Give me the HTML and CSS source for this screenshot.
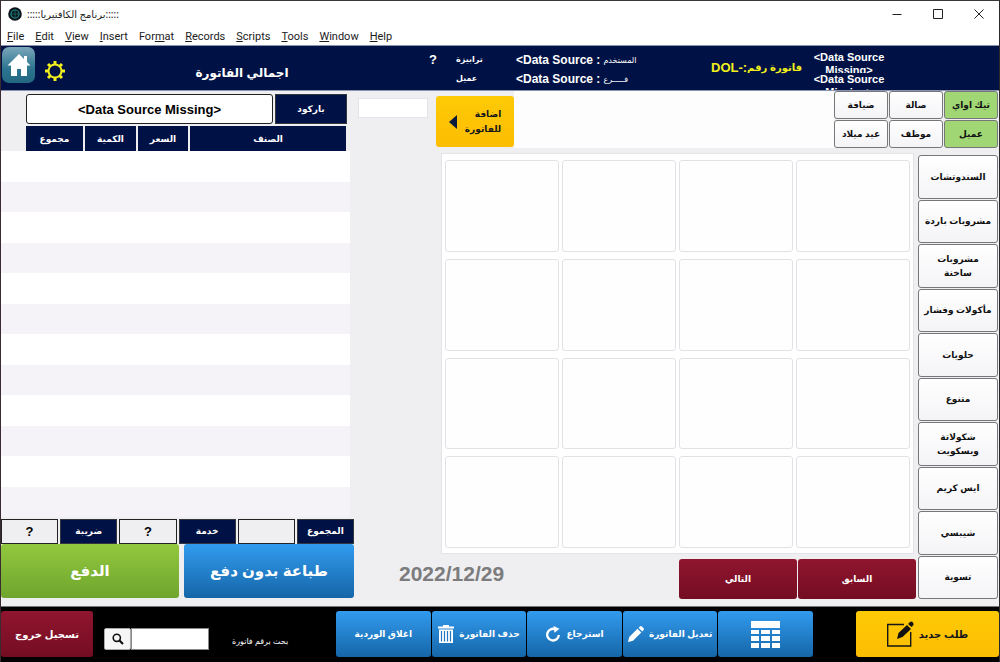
FILE: index.html
```
<!DOCTYPE html>
<html lang="ar">
<head>
    <meta charset="UTF-8">
    <meta name="viewport" content="width=device-width, initial-scale=1.0">
    <title>برنامج الكافتيريا</title>
    <link rel="stylesheet" href="styles.css">
</head>
<body>
    <div class="titlebar">
        <svg class="app-icon" viewBox="0 0 14 14">
            <circle cx="7" cy="7" r="6.8" fill="#0b1518"/>
            <circle cx="7" cy="7" r="4" fill="none" stroke="#1d7f86" stroke-width="1.2"/>
            <path d="M7 2v10M2 7h10" stroke="#1d6a70" stroke-width="0.8"/>
        </svg>
        <span class="app-name" dir="rtl">:::::برنامج الكافتيريا:::::</span>
        <div class="window-buttons">
            <button aria-label="Minimize"><svg viewBox="0 0 10 10"><path d="M0.5 5.5h9"/></svg></button>
            <button aria-label="Maximize"><svg viewBox="0 0 10 10"><path d="M0.5 0.5h9v9h-9z"/></svg></button>
            <button aria-label="Close"><svg viewBox="0 0 10 10"><path d="M0.5 0.5l9 9M9.5 0.5l-9 9"/></svg></button>
        </div>
    </div>
    <nav class="menubar">
        <a href="#"><u>F</u>ile</a>
        <a href="#"><u>E</u>dit</a>
        <a href="#"><u>V</u>iew</a>
        <a href="#"><u>I</u>nsert</a>
        <a href="#">For<u>m</u>at</a>
        <a href="#"><u>R</u>ecords</a>
        <a href="#"><u>S</u>cripts</a>
        <a href="#"><u>T</u>ools</a>
        <a href="#"><u>W</u>indow</a>
        <a href="#"><u>H</u>elp</a>
    </nav>

    <header class="header">
        <button class="home-btn" aria-label="Home">
            <svg viewBox="0 0 24 24"><path fill="#fff" d="M12 1L0.500 12.500H4V23h6v-7h4v7h6V12.500h3.500L20 9V3h-3v3z"/></svg>
        </button>
        <button class="gear-btn" aria-label="Settings">
            <svg viewBox="0 0 20 20" fill="none" stroke="#f3f01c">
                <circle cx="10" cy="10" r="6.500" stroke-width="2"/>
                <path stroke-width="3" d="M10 0v3.500M10 16.500V20M0 10h3.500M16.500 10H20M3 3l2.300 2.300M14.700 14.700L17 17M3 17l2.300-2.300M14.700 5.300L17 3"/>
            </svg>
        </button>
        <h1 dir="rtl">اجمالي الفاتورة</h1>
        <div class="table-no">?</div>
        <div class="table-labels">
            <span>ترابيزة</span>
            <span>عميل</span>
        </div>
        <div class="user-info">
            <div><b>&lt;Data Source :</b><span>المستخدم</span></div>
            <div><b>&lt;Data Source :</b><span>فـــــرع</span></div>
        </div>
        <div class="invoice-no"><b>DOL-:</b><span>فاتورة رقم</span></div>
        <div class="sources">
            <div>&lt;Data Source Missing&gt;</div>
            <div>&lt;Data Source Missing&gt;</div>
        </div>
    </header>

    <main class="workspace">
        <section class="invoice">
            <div class="barcode">
                <input id="barcode" type="text" value="&lt;Data Source Missing&gt;">
                <label for="barcode">باركود</label>
            </div>
            <table class="items" dir="rtl">
                <thead>
                    <tr>
                        <td class="edge"></td>
                        <th class="col-item">الصنف</th>
                        <th class="col-price">السعر</th>
                        <th class="col-qty">الكمية</th>
                        <th class="col-total">مجموع</th>
                        <td class="edge-end"></td>
                    </tr>
                </thead>
                <tbody>
                    <tr><td colspan="6"></td></tr>
                    <tr><td colspan="6"></td></tr>
                    <tr><td colspan="6"></td></tr>
                    <tr><td colspan="6"></td></tr>
                    <tr><td colspan="6"></td></tr>
                    <tr><td colspan="6"></td></tr>
                    <tr><td colspan="6"></td></tr>
                    <tr><td colspan="6"></td></tr>
                    <tr><td colspan="6"></td></tr>
                    <tr><td colspan="6"></td></tr>
                    <tr><td colspan="6"></td></tr>
                    <tr><td colspan="6"></td></tr>
                </tbody>
            </table>
            <div class="totals">
                <input id="tax" type="text" value="?">
                <label for="tax">ضريبة</label>
                <input id="service" type="text" value="?">
                <label for="service">خدمة</label>
                <input id="total" type="text">
                <label for="total">المجموع</label>
            </div>
            <div class="pay">
                <button class="btn green">الدفع</button>
                <button class="btn blue">طباعة بدون دفع</button>
            </div>
        </section>

        <section class="order">
            <div class="order-top">
                <input class="qty" type="text" aria-label="الكمية">
                <button class="btn yellow add-btn">
                    <svg viewBox="0 0 8 14"><path fill="#0a1a3c" d="M8 0v14L0 7z"/></svg>
                    <span dir="rtl">اضافة<br>للفاتورة</span>
                </button>
                <div class="order-space"></div>
                <div class="order-types">
                    <button class="tile">ضيافة</button>
                    <button class="tile">صالة</button>
                    <button class="tile active">تيك اواي</button>
                    <button class="tile">عيد ميلاد</button>
                    <button class="tile">موظف</button>
                    <button class="tile active">عميل</button>
                </div>
            </div>
            <div class="order-main">
                <div class="catalog">
                    <div class="products">
                        <div></div><div></div><div></div><div></div>
                        <div></div><div></div><div></div><div></div>
                        <div></div><div></div><div></div><div></div>
                        <div></div><div></div><div></div><div></div>
                    </div>
                    <div class="pager">
                        <time datetime="2022-12-29">2022/12/29</time>
                        <button class="btn red">التالي</button>
                        <button class="btn red">السابق</button>
                    </div>
                </div>
                <div class="categories">
                    <button class="tile">السندوتشات</button>
                    <button class="tile">مشروبات باردة</button>
                    <button class="tile">مشروبات<br>ساخنة</button>
                    <button class="tile">مأكولات وفشار</button>
                    <button class="tile">حلويات</button>
                    <button class="tile">متنوع</button>
                    <button class="tile">شكولاتة<br>وبسكويت</button>
                    <button class="tile">ايس كريم</button>
                    <button class="tile">شيبسي</button>
                    <button class="tile">تسوية</button>
                </div>
            </div>
        </section>
    </main>

    <footer class="footer">
        <button class="btn red logout">تسجيل خروج</button>
        <div class="search">
            <button aria-label="بحث">
                <svg viewBox="0 0 12 12"><circle cx="4.800" cy="4.800" r="3.600" fill="none" stroke="#111" stroke-width="1.600"/><path d="M7.500 7.500L11 11" stroke="#111" stroke-width="2.200"/></svg>
            </button>
            <input id="search" type="text">
        </div>
        <label class="search-label" for="search">بحث برقم فاتورة</label>
        <div class="actions">
            <button class="btn blue">اغلاق الوردية</button>
            <button class="btn blue">
                <svg class="icon-trash" viewBox="0 0 16 18">
                    <path fill="#fff" d="M5 0h6v1.500h5v2H0v-2h5zM1 4.500h14V18H1z"/>
                    <path stroke="#2079c2" stroke-width="1.200" d="M3.500 6v10.500M6.500 6v10.500M9.500 6v10.500M12.500 6v10.500"/>
                </svg>
                <span>حذف الفاتورة</span>
            </button>
            <button class="btn blue">
                <svg class="icon-redo" viewBox="0 0 16 16">
                    <path fill="none" stroke="#fff" stroke-width="2.400" d="M10.500 3.400A5.800 5.800 0 1 0 13.800 9"/>
                    <path fill="#fff" d="M8.500 0l6 2.800-5 4z"/>
                </svg>
                <span>استرجاع</span>
            </button>
            <button class="btn blue">
                <svg class="icon-pencil" viewBox="0 0 16 16"><path fill="#fff" d="M0 16l1.200-5L9.500 2.700l3.800 3.800L5 14.800zM10.500 1.700L12 0.400q1-0.700 2 0.200l1.400 1.400q0.900 1 0.200 2L14.300 5.500z"/></svg>
                <span>تعديل الفاتورة</span>
            </button>
            <button class="btn blue" aria-label="الجدول">
                <svg class="icon-table" viewBox="0 0 29 27">
                    <path fill="#fff" d="M0 0h29v7H0zM0 9h8v4H0zM10 9h9v4h-9zM21 9h8v4h-8zM0 15h8v5H0zM10 15h9v5h-9zM21 15h8v5h-8zM0 22h8v5H0zM10 22h9v5h-9zM21 22h8v5h-8z"/>
                </svg>
            </button>
        </div>
        <button class="btn yellow new-order">
            <svg viewBox="0 0 27 26">
                <path fill="none" stroke="#151515" stroke-width="1.400" d="M17 3.500H0.700V25h23V11"/>
                <path fill="#111" d="M10 18l1.500-6L20 4l4 4-8.500 8zM21 3l2-2q1.200-1 2.500 0t1 3l-2 2z"/>
            </svg>
            <span>طلب جديد</span>
        </button>
    </footer>
</body>
</html>
```
FILE: styles.css
```
* {
    box-sizing: border-box;
}
body {
    margin: 0;
    min-height: 100vh;
    display: flex;
    flex-direction: column;
    font-family: "Liberation Sans", "DejaVu Sans", sans-serif;
    background-color: #efeff1;
    border-top: 1px solid #3a373c;
    border-left: 1px solid #3a2b33;
    border-right: 1px solid #2a2a2c;
}
button, input {
    font-family: inherit;
    margin: 0;
    padding: 0;
}
button {
    cursor: pointer;
}

/* window frame */
.titlebar {
    display: flex;
    align-items: center;
    height: 26px;
    padding-left: 7px;
    background-color: white;
}
.app-icon {
    width: 14px;
    height: 14px;
    margin-right: 5px;
}
.app-name {
    font-family: "Noto Sans", "DejaVu Sans", sans-serif;
    font-size: 10px;
    color: #222;
}
.window-buttons {
    display: flex;
    margin-left: auto;
}
.window-buttons button {
    width: 41px;
    height: 24px;
    border: none;
    background: none;
}
.window-buttons svg {
    width: 10px;
    height: 10px;
    fill: none;
    stroke: #222;
}
.menubar {
    display: flex;
    gap: 11px;
    height: 18px;
    padding-left: 6px;
    background-color: white;
    font-family: Roboto, "Noto Sans", sans-serif;
    font-size: 11px;
    line-height: 20px;
}
.menubar a {
    color: #1c1c1c;
    text-decoration: none;
}

/* navy header */
.header {
    display: grid;
    grid-template-columns: 34px 39px 336px 46px 60px 195px 98px 80px 1fr;
    height: 46px;
    background-color: #001245;
    border-top: 1px solid #8b93ad;
    border-bottom: 1px solid #8b93ad;
    color: white;
    overflow: hidden;
}
.home-btn {
    width: 33px;
    height: 36px;
    margin: 1px;
    padding: 0;
    border: none;
    border-radius: 7px;
    background: linear-gradient(#7ba6ba, #2c7590 60%, #226782);
}
.home-btn svg {
    width: 24px;
    height: 24px;
    display: block;
    margin: auto;
}
.gear-btn {
    padding: 0;
    border: none;
    background: none;
}
.gear-btn svg {
    width: 20px;
    height: 20px;
    display: block;
    margin: auto;
}
.header h1 {
    margin: 0;
    padding-top: 16px;
    text-align: center;
    font-size: 12px;
    line-height: 22px;
}
.table-no {
    padding-top: 6px;
    text-align: center;
    font-size: 13px;
    font-weight: bold;
}
.table-labels {
    display: flex;
    flex-direction: column;
    padding-top: 4px;
    font-size: 8px;
    font-weight: bold;
    line-height: 19px;
}
.user-info {
    padding-top: 5px;
    font-size: 12px;
    line-height: 19px;
}
.user-info div {
    display: flex;
    gap: 3px;
}
.user-info span {
    font-size: 8px;
}
.invoice-no {
    display: flex;
    padding-top: 12px;
    color: #f3f01c;
    font-size: 13px;
    line-height: 20px;
}
.invoice-no span {
    font-size: 10px;
    font-weight: bold;
}
.sources {
    padding-top: 5px;
    text-align: center;
    font-size: 11px;
    font-weight: bold;
    line-height: 13px;
}
.sources div {
    height: 22px;
    overflow: hidden;
}

/* shared buttons */
.btn {
    display: flex;
    align-items: center;
    justify-content: center;
    gap: 5px;
    border: none;
    border-radius: 3px;
    color: white;
    font-weight: bold;
    font-size: 9px;
}
.btn.green {
    background: linear-gradient(#92c83e, #6fa52d);
}
.btn.blue {
    background: linear-gradient(#329bee, #1566a8);
}
.btn.red {
    background: linear-gradient(#90152f, #740d22);
}
.btn.yellow {
    background: linear-gradient(#fdca06, #fdbd02);
    color: #14141c;
}
.tile {
    border: 1px solid #77777b;
    border-radius: 3px;
    background: linear-gradient(white, #f4f3f6);
    color: #111;
    font-size: 9px;
    font-weight: bold;
    line-height: 14px;
}
.tile.active {
    background: #a0d774;
}

.workspace {
    flex: 1;
    display: grid;
    grid-template-columns: 353px 1fr;
    border-bottom: 1px solid #77777b;
}

/* left: invoice */
.invoice {
    display: flex;
    flex-direction: column;
    padding: 2px 0 8px;
}
.barcode {
    display: flex;
    gap: 2px;
    height: 32px;
    padding: 1px 7px 1px 25px;
}
.barcode input {
    flex: 1;
    min-width: 0;
    border: 1px solid #222;
    border-radius: 3px;
    text-align: center;
    font-size: 13px;
    font-weight: bold;
}
.barcode label {
    width: 72px;
}
.barcode label, .totals label {
    background-color: #001245;
    border: 1px solid #33363c;
    color: white;
    font-size: 9px;
    font-weight: bold;
    text-align: center;
    line-height: 28px;
}
.items {
    flex: 1;
    width: 349px;
    margin-top: 1px;
    border-spacing: 0;
    table-layout: fixed;
}
.items th {
    height: 25px;
    padding: 0;
    background-color: #001245;
    background-clip: padding-box;
    border-left: 2px solid transparent;
    color: white;
    font-size: 9px;
}
.items td {
    padding: 0;
}
.items tbody tr {
    background-color: white;
}
.items tbody tr:nth-child(even) {
    background-color: #f5f3f7;
}
.items tbody td {
    height: 30px;
}
.edge {
    width: 4px;
}
.col-item {
    width: 158px;
}
.col-price {
    width: 52px;
}
.col-qty {
    width: 53px;
}
.edge-end {
    width: 23px;
}
.totals {
    display: grid;
    grid-template-columns: repeat(6, 1fr);
    gap: 2px;
    height: 25px;
    margin-top: 2px;
}
.totals input {
    width: 100%;
    border: 1px solid #222;
    background-color: #efeff1;
    text-align: center;
    font-size: 13px;
    font-weight: bold;
}
.totals label {
    line-height: 22px;
}
.pay {
    display: grid;
    grid-template-columns: 178px 1fr;
    gap: 5px;
    height: 54px;
}
.pay .btn {
    font-size: 15px;
}

/* right: order */
.order {
    display: flex;
    flex-direction: column;
    padding: 0 1px 7px 4px;
}
.order-top {
    display: flex;
    height: 57px;
}
.qty {
    width: 70px;
    height: 20px;
    margin: 7px 8px 0 0;
    border: 1px solid #e4e4e8;
    background-color: white;
}
.add-btn {
    width: 78px;
    height: 51px;
    margin-top: 5px;
    gap: 8px;
    line-height: 15px;
}
.add-btn svg {
    width: 8px;
    height: 14px;
}
.add-btn span {
    text-align: right;
}
.order-space {
    flex: 1;
    background-color: #fdfdfe;
}
.order-types {
    display: grid;
    grid-template-columns: repeat(3, 54px);
    grid-template-rows: 1fr 1fr;
    gap: 1px;
}
.order-main {
    flex: 1;
    display: flex;
    gap: 2px;
    margin-top: 5px;
}
.catalog {
    flex: 1;
    display: flex;
    flex-direction: column;
}
.products {
    flex: 1;
    display: grid;
    grid-template-columns: repeat(4, 1fr);
    gap: 7px 3px;
    margin: 0 2px 0 83px;
    padding: 6px 3px 5px;
    background-color: white;
    border: 1px solid #e2e4e8;
}
.products div {
    border: 1px solid #e3e1e6;
    border-radius: 3px;
    background-color: #fefefe;
}
.pager {
    display: flex;
    gap: 1px;
    height: 40px;
    margin-top: 5px;
}
.pager time {
    flex: 1;
    padding-left: 41px;
    color: #7c7c7e;
    font-size: 21px;
    font-weight: bold;
    line-height: 30px;
}
.pager .btn {
    width: 118px;
}
.categories {
    display: grid;
    grid-auto-rows: 1fr;
    gap: 1px;
    width: 80px;
    margin-top: 2px;
}

/* bottom bar */
.footer {
    display: flex;
    height: 55px;
    padding: 4px 0 5px;
    background-color: black;
}
.footer .btn {
    height: 46px;
}
.logout {
    width: 92px;
}
.footer .logout {
    font-size: 10px;
}
.search {
    display: flex;
    width: 105px;
    height: 22px;
    margin: 17px 23px 0 11px;
}
.search button {
    width: 27px;
    border: 1px solid #aaa;
    border-radius: 2px;
    background-color: #f6f6f6;
}
.search svg {
    width: 12px;
    height: 12px;
    display: block;
    margin: auto;
}
.search input {
    flex: 1;
    min-width: 0;
    border: 1px solid #888;
    background-color: white;
}
.search-label {
    width: 104px;
    padding-top: 22px;
    color: white;
    font-size: 8px;
    line-height: 18px;
}
.actions {
    flex: 1;
    display: grid;
    grid-template-columns: repeat(5, 1fr);
    gap: 1px;
    margin-right: 43px;
}
.icon-trash {
    width: 16px;
    height: 18px;
}
.icon-redo, .icon-pencil {
    width: 16px;
    height: 16px;
}
.icon-table {
    width: 29px;
    height: 27px;
}
.new-order {
    width: 143px;
}
.footer .new-order {
    font-size: 10px;
}
.new-order svg {
    width: 27px;
    height: 26px;
}
```
